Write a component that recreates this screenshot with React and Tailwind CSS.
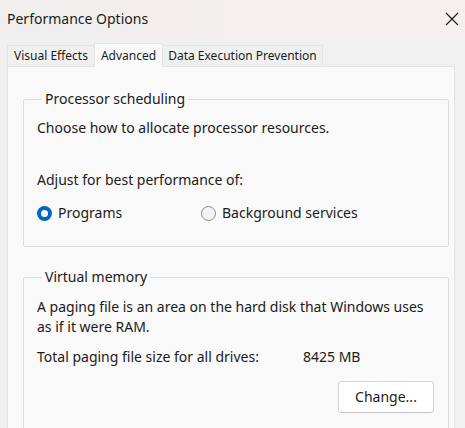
import React from 'react'

function Radio({ checked, label }) {
  return (
    <label className="flex items-center gap-[6px]">
      {checked ? (
        <span className="w-[15px] h-[15px] rounded-full bg-[#0067c0] flex items-center justify-center">
          <span className="w-[7px] h-[7px] rounded-full bg-white" />
        </span>
      ) : (
        <span className="w-[15px] h-[15px] rounded-full border border-[#8a8a8a] bg-[#f3f3f3]" />
      )}
      <span>{label}</span>
    </label>
  )
}

function Group({ title, children, className = '' }) {
  return (
    <fieldset className={`border border-[#dcdcdc] rounded-[2px] px-[13px] ${className}`}>
      <legend className="ml-[5px] px-[3px] text-[#1a1a1a]">{title}</legend>
      {children}
    </fieldset>
  )
}

export default function App() {
  return (
    <div
      className="w-[465px] h-[428px] overflow-hidden bg-[#f0f0f0] text-[14px] leading-[20px] text-[#1b1b1b]"
      style={{ fontFamily: '"Noto Sans", "Segoe UI", sans-serif' }}
    >
      {/* title bar */}
      <div className="h-[38px] flex items-center justify-between pl-[7px] pr-[6px] bg-gradient-to-r from-[#f1eeee] to-[#f5f0f0]">
        <span className="text-[14px]">Performance Options</span>
        <svg width="14" height="14" viewBox="0 0 14 14">
          <path d="M1 1L13 13M13 1L1 13" stroke="#1b1b1b" strokeWidth="1.1" />
        </svg>
      </div>

      {/* tabs */}
      <div className="flex items-end h-[28px] pl-[7px] text-[12px]">
        <div className="h-[21px] px-[6px] flex items-center bg-[#f0f0f0] border-t border-l border-[#e4e4e4]">Visual Effects</div>
        <div className="h-[24px] px-[6px] flex items-center bg-[#f9f9f9] border-t border-x border-[#e4e4e4] -mb-px relative z-10">Advanced</div>
        <div className="h-[21px] px-[5px] flex items-center bg-[#f0f0f0] border-t border-r border-[#e4e4e4]">Data Execution Prevention</div>
      </div>

      {/* panel */}
      <div className="ml-[7px] mr-[10px] h-[400px] border border-[#e4e4e4] bg-[#f9f9f9] pl-[15px] pr-[5px] pt-[22px]">
        <Group title="Processor scheduling" className="pb-[23px]">
          <p className="mt-[9px]">Choose how to allocate processor resources.</p>
          <p className="mt-[32px]">Adjust for best performance of:</p>
          <div className="flex mt-[13px]">
            <div className="w-[164px]">
              <Radio checked label="Programs" />
            </div>
            <Radio label="Background services" />
          </div>
        </Group>

        <Group title="Virtual memory" className="mt-[20px] pb-[20px]">
          <p className="mt-[10px]">A paging file is an area on the hard disk that Windows uses as if it were RAM.</p>
          <div className="flex mt-[10px]">
            <span className="w-[266px]">Total paging file size for all drives:</span>
            <span>8425 MB</span>
          </div>
          <div className="flex justify-end mt-[14px] pr-[1px]">
            <button className="w-[96px] h-[32px] bg-white border border-[#d3d3d3] border-b-[#c4c4c4] rounded-[4px]">
              Change...
            </button>
          </div>
        </Group>
      </div>
    </div>
  )
}
